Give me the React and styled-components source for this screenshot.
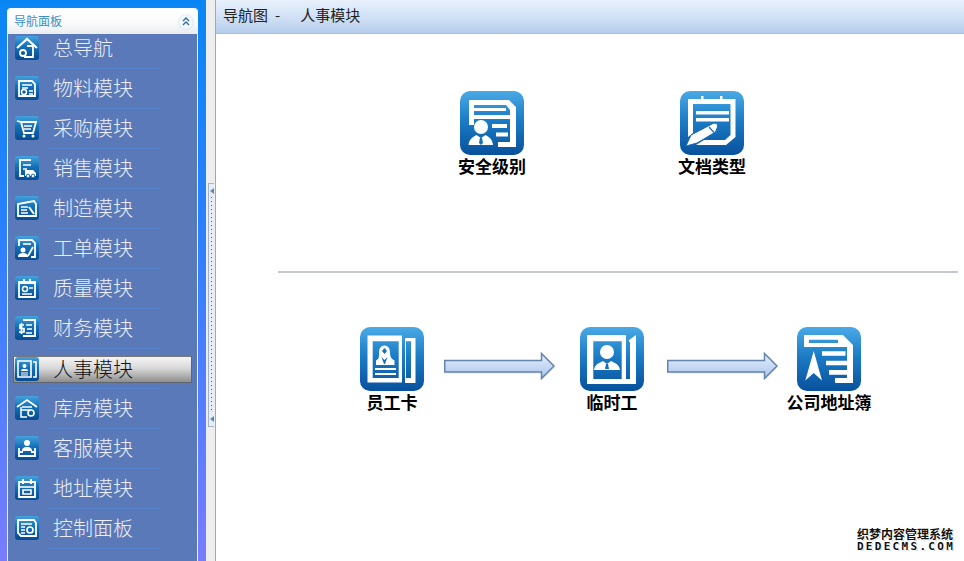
import React, { useId } from 'react';
import styled, { createGlobalStyle } from 'styled-components';

const FONT = `"Noto Sans CJK SC", "Liberation Sans", sans-serif`;

const GlobalStyle = createGlobalStyle`
  html, body {
    margin: 0;
    padding: 0;
    height: 100%;
    overflow: hidden;
    background: #fff;
  }
`;

const Page = styled.div`
  position: relative;
  display: flex;
  width: 964px;
  height: 561px;
  overflow: hidden;
  font-family: ${FONT};
`;

const Sidebar = styled.div`
  width: 191px;
  padding: 8px 8px 0 7px;
  flex: none;
  background: linear-gradient(180deg, #0a86f4 0%, #2a80ff 40%, #7a7cff 100%);
`;

const Panel = styled.div`
  display: flex;
  flex-direction: column;
  height: 553px;
`;

const PanelHead = styled.div`
  display: flex;
  align-items: center;
  justify-content: space-between;
  height: 26px;
  padding: 0 5px 0 7px;
  box-sizing: border-box;
  border-radius: 4px 4px 0 0;
  background: linear-gradient(180deg, #ffffff 0%, #fbfbfb 55%, #e9ecef 100%);
`;

const PanelTitle = styled.span`
  font-size: 12px;
  line-height: 14px;
  color: #3c8fc4;
`;

const Collapse = styled.span`
  display: flex;
  align-items: center;
  justify-content: center;
  width: 14px;
  height: 14px;
  margin-top: 1px;
  border-radius: 50%;
  background: #f2f8fc;
  box-shadow: 0 0 2px #b5cfe2;
`;

const MenuList = styled.div`
  flex: 1;
  background: #5a79b9;
  border-left: 1px solid #e8f0fb;
  border-right: 1px solid #e8f0fb;
  overflow: hidden;
`;

const MenuRow = styled.div`
  position: relative;
  height: 40px;
  padding: 8px 5px 0;
  box-sizing: border-box;
  &:first-child {
    height: 34px;
    padding-top: 2px;
  }
  &::after {
    content: '';
    position: absolute;
    left: 40px;
    bottom: -1px;
    width: 112px;
    height: 1px;
    background: #5683c9;
  }
`;

const MenuLink = styled.div`
  display: flex;
  gap: 14px;
  height: 27px;
  padding-left: 2px;
  box-sizing: border-box;
  color: ${(p) => (p.$active ? '#111' : '#eaeff8')};
  ${(p) =>
    p.$active &&
    `
    padding-left: 1px;
    border: 1px solid #5f6670;
    border-top-color: #777;
    background: linear-gradient(180deg, #f4f4f4 0%, #d8d8d8 45%, #8e8e8e 100%);
  `}
`;

const MenuText = styled.span`
  font-size: 20px;
  line-height: 24px;
  font-weight: 300;
  white-space: nowrap;
`;

const Splitter = styled.div`
  display: flex;
  align-items: center;
  width: 10px;
  flex: none;
  background: #eeeeee;
  border-right: 1px solid #a6a6a6;
  box-sizing: border-box;
  padding-left: 2px;
`;

const SplitHandle = styled.div`
  display: flex;
  flex-direction: column;
  align-items: center;
  justify-content: space-between;
  width: 6px;
  height: 244px;
  margin-top: 49px;
  padding: 4px 0;
  box-sizing: border-box;
  background: #e4eefa;
  border: 1px solid #a9b4c2;
  border-right: none;
`;

const SplitDots = styled.div`
  flex: 1;
  width: 1px;
  margin: 3px 0;
  background: repeating-linear-gradient(180deg, #556 0 1px, transparent 1px 4px);
`;

const Main = styled.div`
  flex: 1;
  display: flex;
  flex-direction: column;
  background: #fff;
`;

const MainHead = styled.div`
  display: flex;
  align-items: center;
  gap: 7px;
  height: 34px;
  padding: 0 0 4px 7px;
  box-sizing: border-box;
  flex: none;
  border-bottom: 1px solid #a9bdd6;
  background: linear-gradient(180deg, #e8f1fc 0%, #cfe0f5 55%, #b5cdec 100%);
  font-size: 15px;
  line-height: 18px;
  color: #222;
`;

const Crumb = styled.span`
  margin-right: ${(p) => p.$gap || 0}px;
  white-space: nowrap;
`;

const TopRow = styled.div`
  display: flex;
  gap: 156px;
  padding: 57px 0 0 244px;
`;

const Divider = styled.div`
  width: 680px;
  height: 2px;
  margin: 94px 0 0 62px;
  background: #c4c8cc;
`;

const FlowRow = styled.div`
  display: flex;
  align-items: flex-start;
  padding: 54px 0 0 144px;
`;

const Node = styled.div`
  display: flex;
  flex-direction: column;
  align-items: center;
  width: 64px;
  flex: none;
`;

const NodeLabel = styled.div`
  font-size: 17px;
  line-height: 22px;
  font-weight: 700;
  color: #000;
  white-space: nowrap;
`;

const ArrowWrap = styled.div`
  flex: none;
  margin: 25px ${(p) => p.$right}px 0 ${(p) => p.$left}px;
  line-height: 0;
`;

const Watermark = styled.div`
  position: absolute;
  right: 10px;
  bottom: 8px;
  display: flex;
  flex-direction: column;
  gap: 1px;
  align-items: center;
  width: 98px;
  color: #111;
  font-weight: 700;
  text-shadow: 1px 0 #fff, -1px 0 #fff, 0 1px #fff, 0 -1px #fff, 1px 1px #bbb;
`;

const MarkCn = styled.div`
  font-size: 12px;
  line-height: 13px;
  white-space: nowrap;
`;

const MarkEn = styled.div`
  font-family: "DejaVu Sans Mono", "Liberation Mono", monospace;
  font-size: 11px;
  line-height: 12px;
  letter-spacing: 2.300px;
  margin-right: -2px;
  white-space: nowrap;
`;

// icon tile: gradient rounded square, white drawing on top. viewBox is 64 for the large ones, 24 for the menu ones
const Tile = ({ size, children }) => {
  const id = useId();
  const big = size > 30;
  const vb = big ? 64 : 24;
  const r = big ? 10 : 3;
  return (
    <svg width={size} height={size} viewBox={`0 0 ${vb} ${vb}`} style={{ flex: 'none', display: 'block' }}>
      <defs>
        <linearGradient id={id} x1="0" y1="0" x2="0" y2="1">
          <stop offset="0" stopColor={big ? '#4aaae6' : '#45a2de'} />
          <stop offset="0.45" stopColor={big ? '#1c7cc6' : '#1470b6'} />
          <stop offset="1" stopColor={big ? '#08519c' : '#074a90'} />
        </linearGradient>
      </defs>
      <rect width={vb} height={vb} rx={r} fill={`url(#${id})`} />
      {children}
    </svg>
  );
};

const W = '#fff';
const B = '#1670b8';

const lgSecurity = (
  <>
    <path fill={W} d="M9 9H49L56 16V56H38V51H50V19L46 14H14V34H9Z" />
    <path fill={W} d="M14 17H46V20H14ZM14 24H50V28H14ZM32 33H47V37H32ZM36 41.500H48V45.500H36Z" />
    <circle cx="21" cy="36" r="7" fill={W} />
    <path fill={W} d="M8.500 54C9 48 13 46 16.500 44L21 47L25.500 44C29 46 32.500 48 33 54Z" />
    <path fill={B} d="M20 46.500H22L23 52L21 54L19 52Z" />
  </>
);

const lgDoc = (
  <>
    <path fill={W} d="M8 8H55.500V46L46 54H16L24 49H45L50.500 44V13H13V42L8 46Z" />
    <path fill={W} d="M21 5H23.500V13H21ZM40 5H42.500V13H40ZM16 20H49V23.500H16ZM16 27H49V30.500H16Z" />
    <path fill={W} stroke={B} strokeWidth="1" d="M6 55L11 44L33 32.500C36 31.500 38 33 37.500 36L35.500 41L17 52Z" />
    <path fill="none" stroke={B} strokeWidth="1.200" d="M29 36L34 41.500" />
  </>
);

const lgCard = (
  <>
    <path fill={W} fillRule="evenodd" d="M7.500 8.500H42V55.500H7.500ZM12.700 14.300V51H38.700V14.300Z" />
    <path fill={W} fillRule="evenodd" d="M45 11H55.500V56H45ZM46 14.300V51H51V14.300Z" />
    <path fill={W} d="M24.500 18.500C28 18.500 30 21.500 30 25.500C30 29 31 32 34.500 33.500V38H16V33.500C19.500 32 19 29 19 25.500C19 21.500 21 18.500 24.500 18.500Z" />
    <path fill={B} d="M24.500 21L27 24L24.500 27L22 24ZM21.500 30L24.500 33L27.500 30L25 37H24Z" />
    <path fill={W} d="M15 41H36V43H15ZM15 46H36V48H15Z" />
  </>
);

const lgTemp = (
  <>
    <path fill={W} fillRule="evenodd" d="M7 8H46V57H7ZM13.300 14.300V52H41.700V14.300Z" />
    <path fill={W} d="M49 13L56 8V57H46V52H50V15L49 15Z" />
    <circle cx="27" cy="25" r="7" fill={W} />
    <path fill={W} d="M14 43C15 37 19 36 23 34L27 37L31 34C35 36 39 37 40 43Z" />
    <path fill={B} d="M26 37H28L29 42H25Z" />
  </>
);

const lgAddr = (
  <>
    <path fill={W} fillRule="evenodd" d="M7 8H46L56 18V56H38V51H50V20H7ZM12 12.700V16H41V12.700Z" />
    <path fill={W} d="M25 24.300H48.500V28.700H25ZM29 33.700H50V38.300H29ZM32 43H50V47.700H32Z" />
    <path fill={W} d="M16.700 24L25 53.500L16.700 46L8.300 53.500Z" />
  </>
);

const smHome = (
  <>
    <path fill="none" stroke={W} strokeWidth="2.200" d="M2 12L12 3L22 12" />
    <path fill="none" stroke={W} strokeWidth="1.800" d="M12 10H18V21H9" />
    <circle cx="8" cy="17" r="3" fill="none" stroke={W} strokeWidth="1.800" />
  </>
);
const smMaterial = (
  <>
    <path fill="none" stroke={W} strokeWidth="1.800" d="M4 5H17L20 8V20H4Z" />
    <path stroke={W} strokeWidth="1.600" d="M7 9H17M7 12H13M14 15H18M14 18H18" />
    <circle cx="9" cy="16" r="2.500" fill="none" stroke={W} strokeWidth="1.500" />
  </>
);
const smCart = (
  <>
    <path fill="none" stroke={W} strokeWidth="1.800" d="M2 5L6 6L9 17H18L21 6L6 6" />
    <path stroke={W} strokeWidth="1.400" d="M9 10H17M9 13H16" />
    <circle cx="9" cy="20" r="1.500" fill={W} />
    <circle cx="18" cy="20" r="1.500" fill={W} />
  </>
);
const smSales = (
  <>
    <path fill="none" stroke={W} strokeWidth="1.800" d="M16 4H5V20H9" />
    <path stroke={W} strokeWidth="1.500" d="M8 9H16M8 13H12" />
    <path fill={W} d="M10 14H18L21 17V20H10Z" />
    <circle cx="13" cy="20" r="1.800" fill={W} stroke={B} />
    <circle cx="18" cy="20" r="1.800" fill={W} stroke={B} />
  </>
);
const smMake = (
  <>
    <path fill="none" stroke={W} strokeWidth="1.800" d="M3 8L19 5L21 8V20H3Z" />
    <path stroke={W} strokeWidth="1.500" d="M6 11H13M6 14H12M6 17H13" />
    <path stroke={W} strokeWidth="2" d="M14 11L19 18" />
  </>
);
const smOrder = (
  <>
    <path fill="none" stroke={W} strokeWidth="1.800" d="M4 10V4H17L20 7V21H16" />
    <path stroke={W} strokeWidth="1.600" d="M8 8H16" />
    <circle cx="8" cy="14" r="2.500" fill={W} />
    <path fill={W} d="M3 21C3 18 5 17 8 17C11 17 13 18 13 21Z" />
    <path stroke={W} strokeWidth="1.800" d="M13 20L18 11" />
  </>
);
const smQuality = (
  <>
    <path fill="none" stroke={W} strokeWidth="1.800" d="M4 7H20V21H4Z" />
    <path stroke={W} strokeWidth="1.800" d="M3 6H21M9 3V7M15 3V7" />
    <circle cx="10" cy="13" r="2.500" fill="none" stroke={W} strokeWidth="1.500" />
    <path stroke={W} strokeWidth="1.500" d="M7 18H17M14 12H18" />
  </>
);
const smFinance = (
  <>
    <path fill="none" stroke={W} strokeWidth="1.800" d="M8 4H20V20H8" />
    <path stroke={W} strokeWidth="1.600" d="M11 9H17M12 13H17M11 17H17" />
    <path fill="none" stroke={W} strokeWidth="1.700" d="M9 9H5V12.500H9V16H4M6.500 7V18" />
  </>
);
const smHr = (
  <>
    <path fill="none" stroke={W} strokeWidth="1.600" d="M3 4H16V20H3Z" />
    <path fill="none" stroke={W} strokeWidth="1.600" d="M18 5H21V20H18" />
    <circle cx="9.500" cy="9" r="2" fill={W} />
    <path fill={W} d="M6 14C6 12 8 12 9.500 12C11 12 13 12 13 14Z" />
    <path stroke={W} d="M6 16H13M6 18H13" />
  </>
);
const smStock = (
  <>
    <path fill="none" stroke={W} strokeWidth="1.800" d="M2 11L12 4L22 11" />
    <path fill="none" stroke={W} strokeWidth="1.500" d="M7 11H17M6 14H15M6 11V21H12" />
    <circle cx="16" cy="17" r="3" fill="none" stroke={W} strokeWidth="1.600" />
  </>
);
const smService = (
  <>
    <circle cx="12" cy="7" r="3" fill={W} />
    <path fill={W} d="M7 15C7 12 9 11 12 11C15 11 17 12 17 15Z" />
    <path fill="none" stroke={W} strokeWidth="1.800" d="M4 12V20H20V12M4 16H8M16 16H20" />
  </>
);
const smAddress = (
  <>
    <path fill="none" stroke={W} strokeWidth="1.800" d="M4 6H20V21H4Z" />
    <path stroke={W} strokeWidth="2" d="M8 3V8M16 3V8" />
    <path stroke={W} strokeWidth="1.600" d="M4 11H20" />
    <path fill="none" stroke={W} strokeWidth="1.600" d="M8 14H16V18H8Z" />
  </>
);
const smControl = (
  <>
    <path fill="none" stroke={W} strokeWidth="1.800" d="M3 4H19L21 7V20H6L3 17Z" />
    <path stroke={W} strokeWidth="1.500" d="M6 8H17M6 11H10M6 14H10M6 17H10" />
    <circle cx="15" cy="14" r="3" fill="none" stroke={W} strokeWidth="1.700" />
  </>
);

const menus = [
  ['总导航', smHome],
  ['物料模块', smMaterial],
  ['采购模块', smCart],
  ['销售模块', smSales],
  ['制造模块', smMake],
  ['工单模块', smOrder],
  ['质量模块', smQuality],
  ['财务模块', smFinance],
  ['人事模块', smHr, true],
  ['库房模块', smStock],
  ['客服模块', smService],
  ['地址模块', smAddress],
  ['控制面板', smControl],
];

const Arrow = () => {
  const id = useId();
  return (
    <svg width="112" height="29" viewBox="0 0 112 29" style={{ display: 'block' }}>
      <defs>
        <linearGradient id={id} x1="0" y1="0" x2="0" y2="1">
          <stop offset="0" stopColor="#e6effb" />
          <stop offset="1" stopColor="#a9c4ee" />
        </linearGradient>
      </defs>
      <path d="M0.750 10H97.500V2L110 14.500L97.500 27V20H0.750Z" fill="#9aa" opacity="0.25" transform="translate(0 1.500)" />
      <path d="M0.750 8.500H97.500V1.500L110 14L97.500 26.500V20H0.750Z" fill={`url(#${id})`} stroke="#6584ad" strokeWidth="1.500" />
    </svg>
  );
};

const App = () => {
  return (
    <Page>
      <GlobalStyle />
      <Sidebar>
        <Panel>
          <PanelHead>
            <PanelTitle>导航面板</PanelTitle>
            <Collapse>
              <svg width="8" height="9" viewBox="0 0 8 9">
                <path d="M1 4L4 1L7 4M1 8L4 5L7 8" fill="none" stroke="#2f6d9e" strokeWidth="1.300" />
              </svg>
            </Collapse>
          </PanelHead>
          <MenuList>
            {menus.map(([name, icon, active]) => (
              <MenuRow key={name}>
                <MenuLink $active={active}>
                  <Tile size={24}>{icon}</Tile>
                  <MenuText>{name}</MenuText>
                </MenuLink>
              </MenuRow>
            ))}
          </MenuList>
        </Panel>
      </Sidebar>
      <Splitter>
        <SplitHandle>
          <svg width="4" height="6" viewBox="0 0 4 6"><path d="M4 0V6L0 3Z" fill="#5f88b5" /></svg>
          <SplitDots />
          <svg width="4" height="6" viewBox="0 0 4 6"><path d="M4 0V6L0 3Z" fill="#5f88b5" /></svg>
        </SplitHandle>
      </Splitter>
      <Main>
        <MainHead>
          <Crumb>导航图</Crumb>
          <Crumb $gap={13}>-</Crumb>
          <Crumb>人事模块</Crumb>
        </MainHead>
        <TopRow>
          <Node>
            <Tile size={64}>{lgSecurity}</Tile>
            <NodeLabel>安全级别</NodeLabel>
          </Node>
          <Node>
            <Tile size={64}>{lgDoc}</Tile>
            <NodeLabel>文档类型</NodeLabel>
          </Node>
        </TopRow>
        <Divider />
        <FlowRow>
          <Node>
            <Tile size={64}>{lgCard}</Tile>
            <NodeLabel>员工卡</NodeLabel>
          </Node>
          <ArrowWrap $left={20} $right={24}><Arrow /></ArrowWrap>
          <Node>
            <Tile size={64}>{lgTemp}</Tile>
            <NodeLabel>临时工</NodeLabel>
          </Node>
          <ArrowWrap $left={23} $right={18}><Arrow /></ArrowWrap>
          <Node>
            <Tile size={64}>{lgAddr}</Tile>
            <NodeLabel>公司地址簿</NodeLabel>
          </Node>
        </FlowRow>
      </Main>
      <Watermark>
        <MarkCn>织梦内容管理系统</MarkCn>
        <MarkEn>DEDECMS.COM</MarkEn>
      </Watermark>
    </Page>
  );
};

export default App;
